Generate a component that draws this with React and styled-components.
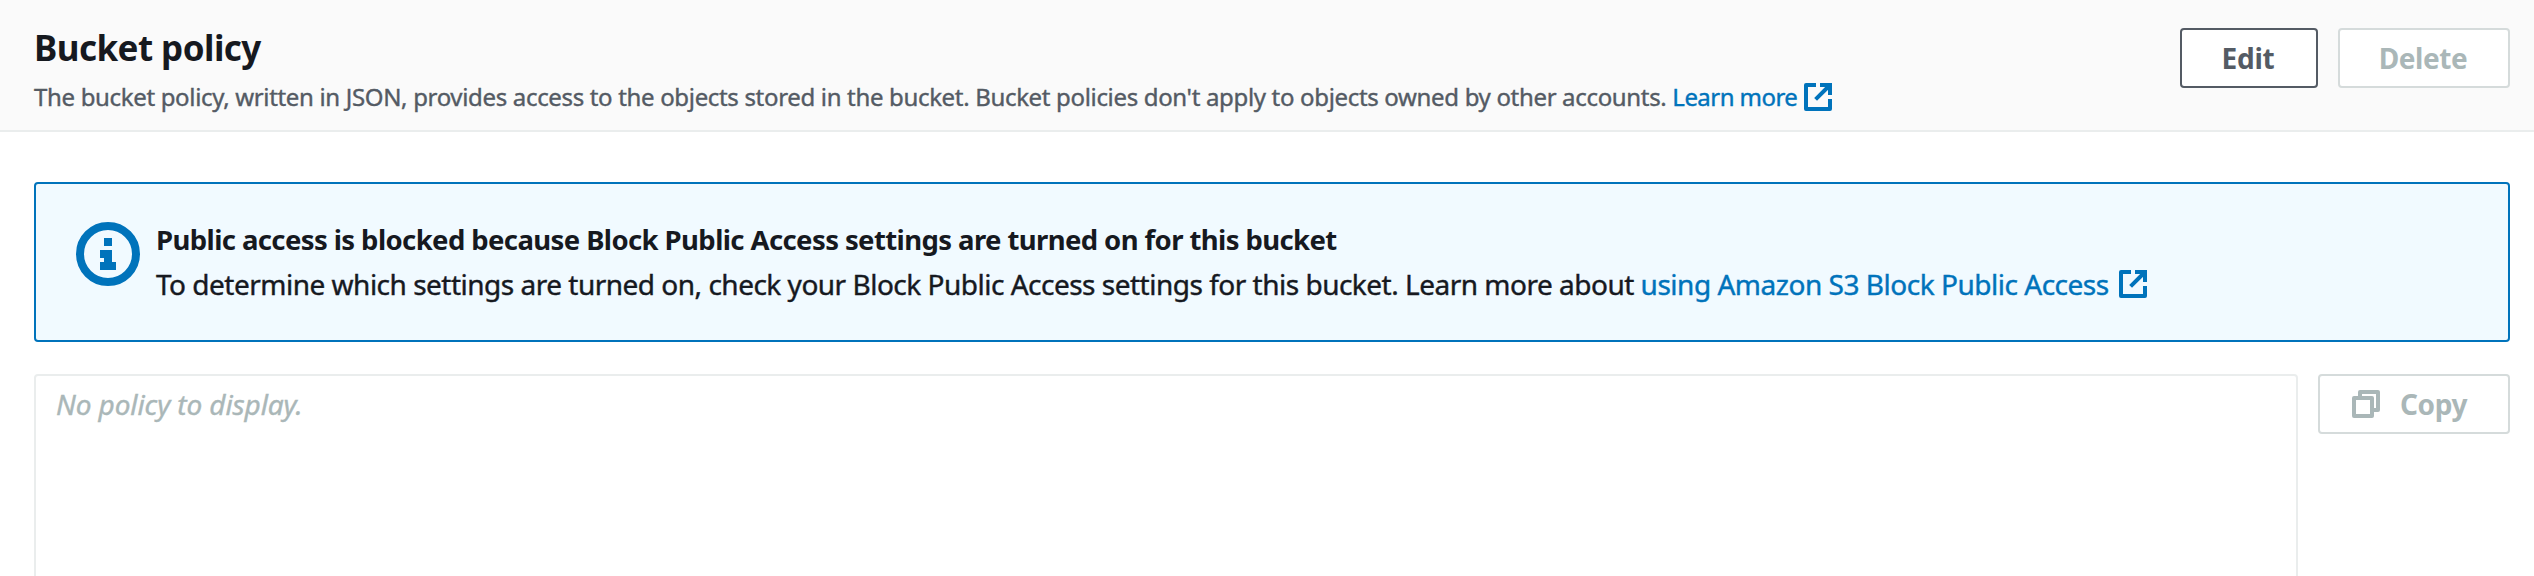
import React from "react";
import styled, { createGlobalStyle } from "styled-components";

const GlobalStyle = createGlobalStyle`
  * { box-sizing: border-box; }
  body {
    margin: 0;
    background: #fff;
    color: #16191f;
    font-family: "Noto Sans", "Open Sans", sans-serif;
  }
`;

const Panel = styled.section`
  display: flex;
  flex-direction: column;
  height: 100vh;
  overflow: hidden;
`;

const Header = styled.header`
  display: flex;
  flex: none;
  justify-content: space-between;
  align-items: flex-start;
  height: 132px;
  padding: 26px 24px 0 34px;
  background: #fafafa;
  border-bottom: 2px solid #eaeded;
`;

const Title = styled.h2`
  margin: 0 0 9px;
  font-size: 35px;
  font-weight: 700;
  line-height: 44px;
  letter-spacing: -0.55px;
`;

const Description = styled.p`
  margin: 0;
  color: #545b64;
  font-size: 24px;
  line-height: 36px;
  letter-spacing: -0.33px;
  white-space: nowrap;
  -webkit-text-stroke: 0.4px currentColor;
`;

const Actions = styled.div`
  display: flex;
  gap: 20px;
  padding-top: 2px;
`;

const Button = styled.button`
  display: inline-flex;
  flex: none;
  align-items: center;
  justify-content: ${(p) => (p.$withIcon ? "flex-start" : "center")};
  gap: 18px;
  width: ${(p) => p.$width}px;
  height: 60px;
  padding: 0 ${(p) => (p.$withIcon ? 30 : 2)}px 0 ${(p) => (p.$withIcon ? 30 : 0)}px;
  background: #fff;
  border: 2px solid #545b64;
  border-radius: 4px;
  color: #545b64;
  font: 700 28px/40px "Noto Sans", "Open Sans", sans-serif;
  letter-spacing: -0.2px;

  &:disabled {
    border-color: #d5dbdb;
    color: #aab7b8;
    letter-spacing: -0.4px;
  }
`;

const Link = styled.a`
  display: inline-flex;
  align-items: center;
  gap: ${(p) => p.$gap}px;
  height: 1lh;
  vertical-align: top;
  color: #0073bb;
  letter-spacing: ${(p) => p.$tracking}px;
  text-decoration: none;
`;

const Icon = styled.svg`
  flex: none;
  width: ${(p) => p.$size}px;
  height: ${(p) => p.$size}px;
  fill: none;
  stroke: currentColor;
  stroke-width: 2;
`;

const Body = styled.div`
  display: flex;
  flex: 1;
  flex-direction: column;
  gap: 32px;
  min-height: 0;
  padding: 50px 24px 0 34px;
`;

const Alert = styled.div`
  display: flex;
  flex: none;
  gap: 16px;
  height: 160px;
  padding: 34px 40px;
  background: #f1faff;
  border: 2px solid #0073bb;
  border-radius: 4px;
`;

const AlertIcon = styled.div`
  height: 64px;
  padding-top: 4px;
  color: #0073bb;
`;

const AlertText = styled.div`
  font-size: 28px;
  line-height: 44px;
  letter-spacing: -0.5px;
  white-space: nowrap;
`;

const AlertTitle = styled.div`
  font-size: 27.5px;
  font-weight: 700;
  letter-spacing: -0.6px;
`;

const AlertMessage = styled.div`
  -webkit-text-stroke: 0.4px currentColor;
`;

const PolicyRow = styled.div`
  display: flex;
  flex: 1;
  align-items: flex-start;
  gap: 20px;
`;

const PolicyBox = styled.div`
  flex: 1;
  height: 400px;
  padding: 6px 20px;
  border: 2px solid #eaeded;
  border-radius: 4px;
  color: #aab7b8;
  font-size: 28px;
  font-style: italic;
  line-height: 44px;
  letter-spacing: -0.1px;
  -webkit-text-stroke: 0.4px currentColor;
`;

const ExternalIcon = () => (
  <Icon $size={32} viewBox="0 0 16 16" aria-hidden="true">
    <path strokeLinejoin="round" d="M7 2H2v12h12V9" />
    <path d="M9 2h5v5M14 2L6.8 9.2" />
  </Icon>
);

const CopyIcon = () => (
  <Icon $size={32} viewBox="0 0 16 16" strokeLinejoin="round" aria-hidden="true">
    <path d="M2 5h9v9H2zM5 4V2h9v9h-2" />
  </Icon>
);

const InfoIcon = () => (
  <Icon $size={64} viewBox="0 0 16 16" aria-hidden="true">
    <circle cx="8" cy="8" r="7" />
    <path
      fill="currentColor"
      stroke="none"
      shapeRendering="crispEdges"
      d="M7 4h2v2H7zM6 7h3v3h1v2H6v-2h1V9H6z"
    />
  </Icon>
);

export default function App() {
  return (
    <Panel>
      <GlobalStyle />
      <Header>
        <div>
          <Title>Bucket policy</Title>
          <Description>
            The bucket policy, written in JSON, provides access to the objects stored in the
            bucket. Bucket policies don't apply to objects owned by other accounts.{" "}
            <Link href="#" $gap={5} $tracking={-0.55}>
              Learn more
              <ExternalIcon />
            </Link>
          </Description>
        </div>
        <Actions>
          <Button $width={138}>Edit</Button>
          <Button $width={172} disabled>Delete</Button>
        </Actions>
      </Header>
      <Body>
        <Alert>
          <AlertIcon>
            <InfoIcon />
          </AlertIcon>
          <AlertText>
            <AlertTitle>
              Public access is blocked because Block Public Access settings are turned on for
              this bucket
            </AlertTitle>
            <AlertMessage>
              To determine which settings are turned on, check your Block Public Access settings
              for this bucket. Learn more about{" "}
              <Link href="#" $gap={8} $tracking={-0.48}>
                using Amazon S3 Block Public Access
                <ExternalIcon />
              </Link>
            </AlertMessage>
          </AlertText>
        </Alert>
        <PolicyRow>
          <PolicyBox>No policy to display.</PolicyBox>
          <Button $width={192} $withIcon disabled>
            <CopyIcon />
            Copy
          </Button>
        </PolicyRow>
      </Body>
    </Panel>
  );
}
